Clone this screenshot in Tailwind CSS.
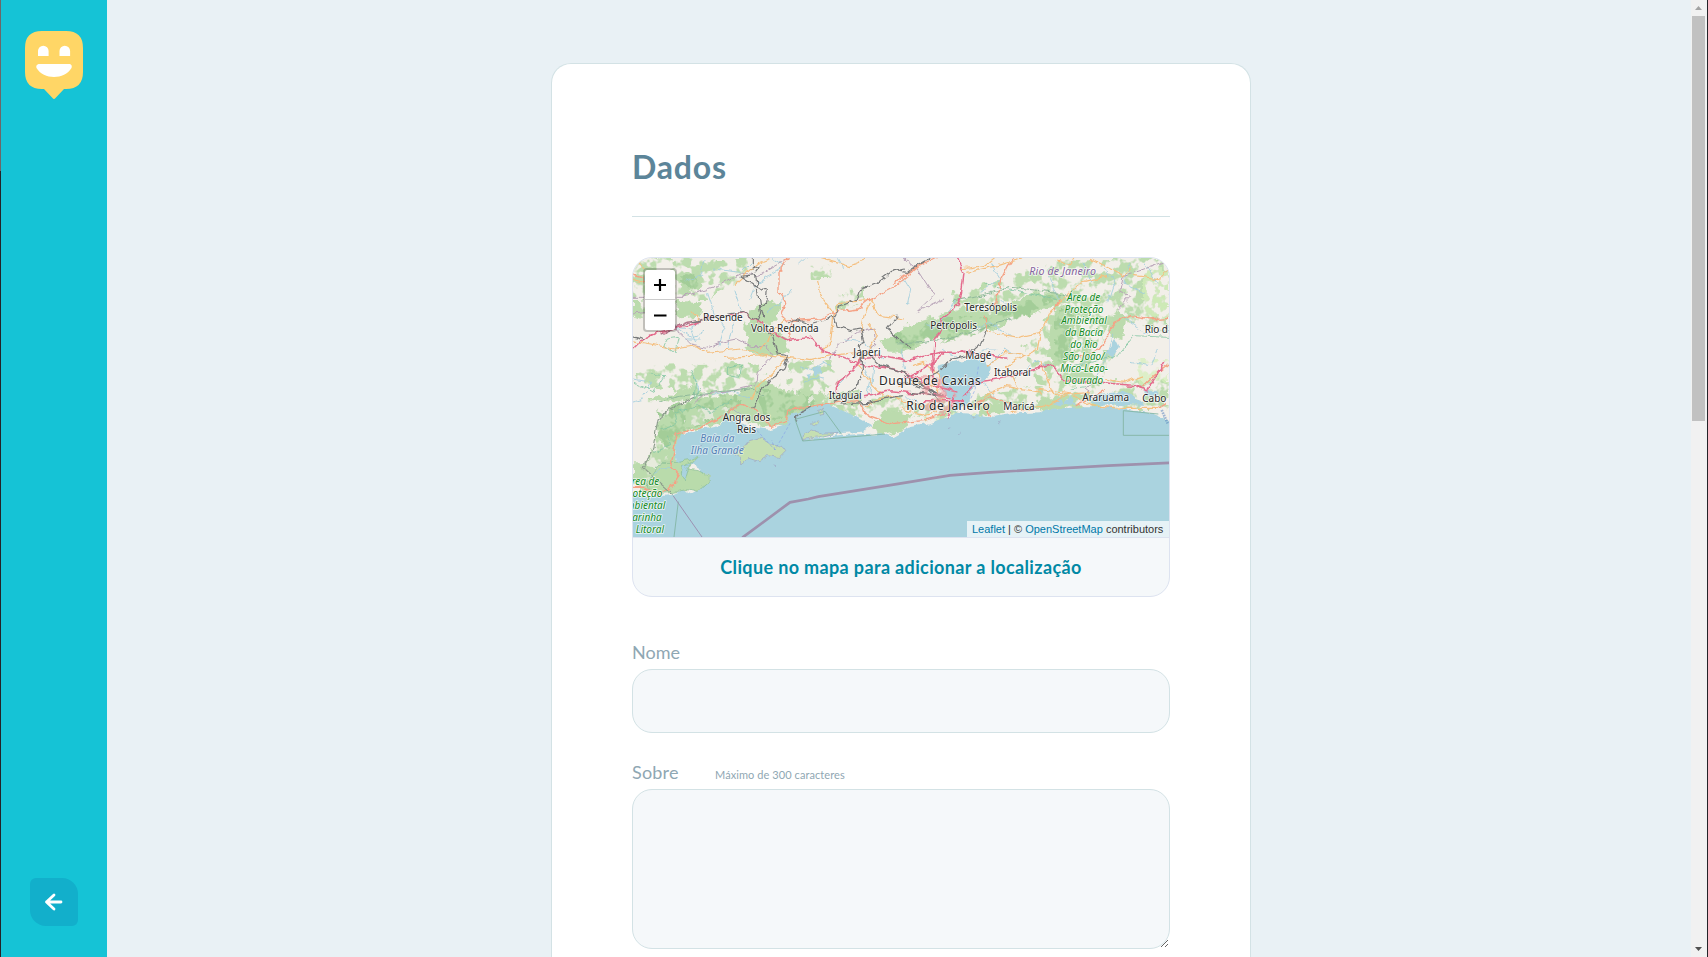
<!DOCTYPE html>
<html lang="pt-BR">
<head>
<meta charset="utf-8">
<title>Happy</title>
<script src="https://cdn.jsdelivr.net/npm/@tailwindcss/browser@4"></script>
</head>
<body class="flex h-screen overflow-hidden bg-[#e9f1f5] font-[Lato,sans-serif]">
<div class="flex w-px shrink-0 flex-col"><div class="h-[171px] bg-[#6c6768]"></div><div class="flex-1 bg-[#242328]"></div></div>
<aside class="flex w-[106px] shrink-0 flex-col items-center justify-between bg-[#15c3d6] pt-[31px] pr-px pb-[31px]">
  <svg class="h-[69px] w-[58px]" viewBox="0 0 58 69">
    <path fill="#ffd666" d="M17 0H41Q58 0 58 17V41Q58 58 41 58H39L30.500 67Q29 69 27.500 67L19 58H17Q0 58 0 41V17Q0 0 17 0Z"/>
    <path fill="#fff" d="M13 25V20a5.300 5.300 0 0 1 10.600 0V25ZM34.500 25V20a5.300 5.300 0 0 1 10.600 0V25ZM13.500 33H45Q47.500 34 46.500 37C43 43 36 46 29 46S15 43 11.500 37Q10.500 34 13.500 33Z"/>
  </svg>
  <button class="flex size-12 items-center justify-center rounded-tl-[6px] rounded-tr-2xl rounded-br-[6px] rounded-bl-2xl bg-[#12afcb]" aria-label="Voltar">
    <svg class="size-6" viewBox="0 0 24 24" fill="none" stroke="#fff" stroke-width="2.800" stroke-linecap="round" stroke-linejoin="round"><path d="M19 12H4.500M12 5L4.500 12L12 19"/></svg>
  </button>
</aside>
<main class="flex min-w-0 flex-1 justify-center pt-[63px] pl-1">
  <form class="w-[700px] shrink-0 rounded-t-[20px] border border-b-0 border-[#d3e2e5] bg-white px-20 pt-20">
    <h1 class="h-[73px] border-b border-[#d3e2e5] text-[32px] leading-[46px] font-bold tracking-[0.8px] text-[#5c8599]">Dados</h1>
    <div class="relative mt-10 h-[340px] overflow-hidden rounded-[20px] border border-[#dde3f0] bg-[#f5f8fa]">
      <svg class="block h-[279px] w-[536px]" viewBox="24 24 1608 837" preserveAspectRatio="none">
        <defs>
          <filter id="rough" x="-5%" y="-5%" width="110%" height="110%"><feTurbulence type="fractalNoise" baseFrequency="0.035" numOctaves="3" seed="4"/><feDisplacementMap in="SourceGraphic" scale="20" xChannelSelector="R" yChannelSelector="G"/><feOffset dx="-4" dy="-4"/></filter>
          <filter id="patchy" x="-5%" y="-5%" width="110%" height="110%"><feTurbulence type="fractalNoise" baseFrequency="0.03" numOctaves="3" seed="9" result="n"/><feColorMatrix in="n" type="matrix" values="0 0 0 0 0 0 0 0 0 0 0 0 0 0 0 9 0 0 0 -4.100" result="m"/><feDisplacementMap in="SourceGraphic" in2="n" scale="45" xChannelSelector="R" yChannelSelector="G" result="d"/><feComposite in="d" in2="m" operator="in"/></filter>
          <filter id="edge" x="-5%" y="-5%" width="110%" height="110%"><feTurbulence type="fractalNoise" baseFrequency="0.04" numOctaves="3" seed="2"/><feDisplacementMap in="SourceGraphic" scale="32" xChannelSelector="R" yChannelSelector="G"/></filter>
        </defs>
        <rect x="0" y="0" width="1660" height="880" fill="#f2efe9"/>
        <!-- scattered woodland -->
        <g fill="#bcdcae" filter="url(#patchy)">
          <path d="M24 24H390L350 90L260 150L150 150L24 210ZM24 390L60 345L330 340L400 350L470 400L420 450H300L200 440ZM500 330L620 330L640 400L560 450H490ZM560 50H620V90H560ZM620 140L720 110L720 160L640 180ZM560 440H1000V500H560Z"/>
          <path d="M990 130L1140 90L1290 30L1632 24V260L1500 200L1440 260L1340 430L1240 400L1200 300L1280 180L1100 200L960 260ZM1000 450L1140 420L1400 400L1632 390V480H1000ZM1300 300H1480L1420 400H1290ZM520 330L620 330L610 400L540 440Z"/>
        </g>
        <path fill="#d5efba" opacity=".7" filter="url(#patchy)" d="M1560 60H1632V200H1560ZM1540 330H1632V400H1540ZM900 500H1060V520H900ZM400 210H460V270H400Z"/>
        <!-- dense forest -->
        <g fill="#bbdbad" filter="url(#edge)">
          <path d="M370 200L395 165L465 155L455 205L430 235L490 262V315L430 312L375 315L362 290L370 250L358 235ZM160 80L225 65L230 115L180 130ZM150 155L230 160L225 200L165 205ZM24 150L50 150V200H24ZM765 270L840 230V305L790 305Z"/>
          <path d="M810 265L850 225L960 190L1010 175L1100 190L1180 150L1230 125L1320 130L1330 155L1220 190L1160 205L1100 240L1060 230L1000 265L960 270L930 250L870 295L810 305Z"/>
          <path d="M1460 210L1480 170L1500 200L1495 270L1450 260ZM1280 190L1330 160L1360 200L1320 330L1290 350L1270 300Z"/>
          <path d="M70 450L105 430L130 440L210 400L230 430L150 460ZM24 640L60 640L100 560L95 520L140 480L210 445L330 430L400 395L480 420L620 435L700 420L720 455L600 475L540 490L500 530L420 530L340 505L240 530L170 550L150 620L150 710L60 730L24 700Z"/>
          <path d="M730 530L790 475L860 490L840 540L780 555ZM1060 470L1130 460L1140 485L1050 500ZM1240 450L1320 440L1330 475L1240 485Z"/>
        </g>
        <!-- relief inside the forests -->
        <g fill="#a3cd98" filter="url(#patchy)">
          <path d="M100 480L210 445L330 430L360 460L300 500L170 550L130 600L110 560ZM810 265L960 200L1100 200L1230 135L1320 140L1220 190L1060 250L870 295L810 305ZM400 420L620 440L500 500L420 500ZM1290 180H1350V340H1290ZM170 80L220 75V115H180Z"/>
        </g>
        <path fill="#f2efe9" filter="url(#patchy)" opacity=".8" d="M200 490L320 470L300 500L180 530ZM90 560L130 600L120 700L60 690ZM560 440H700V460H560Z"/>
        <!-- sea, bays and lagoons -->
        <g fill="#aad3df" filter="url(#rough)">
          <path d="M0 712L60 745L145 738L180 722L205 735L228 722L240 702L262 690L245 675L222 682L226 660L200 645L185 662L165 658L155 640L152 610L160 575L175 556L230 540L290 528L310 505L350 520L380 535L440 542L490 528L500 495L525 488L565 476L610 465L650 482L690 500L745 532L715 548L650 552L535 572L650 558L780 553L805 562L850 536L910 525L950 510L985 500L980 490L1050 495L1110 503L1180 493L1250 490L1270 480L1370 475L1450 475L1510 482L1590 494L1615 505L1660 530V900H0Z"/>
          <path d="M940 350L1000 335L1060 330L1100 350L1098 380L1060 410L1038 430L1032 470L990 485L985 455L960 430L950 380ZM570 355L595 350L590 375L570 380ZM545 375L560 372L555 390ZM1450 310L1475 270L1485 290L1460 330ZM1400 465L1420 435L1500 428L1550 455L1560 470ZM1290 460L1310 445L1320 468ZM1320 465L1340 445L1355 468ZM1560 425H1600V440H1570Z"/>
        </g>
        <g fill="#c5dfb2" stroke="#9fa6c4" stroke-width="2" filter="url(#rough)">
          <path d="M330 610L355 600L370 580L410 568L440 585L475 588L485 605L465 625L430 620L405 638L375 628L350 648L350 625ZM535 572L540 555L565 543L590 552L645 551L590 562Z"/>
          <path d="M565 525l12-10 5 5-10 10ZM580 485l15-5 5 10-15 3ZM1040 498l12 2-5 5ZM972 540l10-4M1005 553l5 0M1125 525l8-7M450 648l6 2M300 510l25-30 35 25-30 10ZM225 590l10-5"/>
        </g>
        <g fill="#b9dbab" stroke="#86bb94" stroke-width="2" filter="url(#rough)">
          <path d="M160 640L190 635L225 625L205 645L190 660L220 665L250 680L262 692L240 710L220 730L190 722L150 730L80 735L70 700L110 640Z"/>
          <path fill="#aad3df" d="M175 650L205 640L190 655L180 690L172 675Z"/>
        </g>
        <!-- rivers -->
        <g fill="none" stroke="#9fcddd" stroke-width="2.500" filter="url(#rough)">
          <path d="M60 80L80 130L95 140M240 30L230 80L180 100M250 130L270 190L300 240L285 290M330 120L350 180L320 250L310 300M380 40L350 70L270 60M440 25L480 50L400 100L380 150M500 120L470 160L430 190M525 50L550 25M230 215L195 240L160 235L200 265L240 250M200 240L215 280M180 270L230 270M30 390L80 400L60 440M210 380L225 440M265 440L330 425L380 450M640 25L660 60M660 270L720 280L780 330M720 340L740 400L730 440M750 350L740 440M690 360L640 410M830 300L845 360M835 80L860 120L850 170M960 300L1000 330M900 220L930 240L970 200M1045 240L1100 220L1160 260M1040 320L1080 300L1120 300M1090 350L1140 300L1180 320M1170 390L1230 340L1280 350M1000 150L970 190M1100 40L1130 90L1070 130M1130 150L1160 180M1270 80L1310 160M1380 40L1400 100M1440 60L1470 100L1450 160M1520 40L1500 100L1560 130M1560 40L1600 100M1500 210L1560 250L1632 250M1470 260L1440 340L1410 400M1400 310L1350 380M1520 340L1580 350L1600 300M90 670L130 655L150 660M60 450L24 460M840 440L900 470M1080 400L1110 440M530 350L560 365L600 340L620 350M540 400L570 385L600 390"/>
          <path stroke="#84c7a3" d="M200 360L215 400L210 450L230 420M30 400L90 430L120 380L80 375M130 270L160 265L150 310L120 290L130 270M310 355L350 345L345 385L310 380L310 355M1340 420L1400 410M1320 360L1480 320L1530 260L1632 265M1080 100L1140 120L1300 150M110 540L160 520L150 490L220 470L260 490L330 450M90 610L140 590L130 560"/>
        </g>
        <!-- boundaries -->
        <g fill="none" stroke="#b7a2b7" stroke-width="3" filter="url(#rough)">
          <path d="M24 195L65 190M155 225L170 255L200 285L250 295L290 280L340 270L380 290L430 290L445 320L400 370L395 410L300 430L240 435L210 460M840 25L880 60L930 140L880 190L960 150M24 145H180L210 130L280 110L350 75L400 80L490 30M1632 35L1560 60L1500 80L1490 130L1520 140L1480 180M620 330L640 290L700 250L750 240L755 285L690 330M1410 400L1380 420L1420 450"/>
          <path stroke="#8fb99a" d="M990 155L1080 140L1160 115L1300 130L1340 150M820 285L900 280L960 270L1050 245L1160 210M105 460L130 450L180 440L260 430L380 420L420 440"/>
        </g>
        <!-- secondary roads -->
        <g fill="none" stroke="#f5bf7f" stroke-width="3.500" filter="url(#rough)">
          <path d="M24 275L80 285L150 300L220 290L250 310L350 300L420 315L490 325L560 335L620 320L700 310M60 60L40 30M330 110L400 45L450 25M410 300L440 260L480 210M580 95L590 140L630 195M590 25L680 50L740 25M630 195L650 160L740 155L770 200L840 210M630 195L620 280L590 310M740 155L720 200L710 250M735 225L760 260L720 320L700 350L740 400L780 440M380 450L400 415L490 325M24 90L90 110L150 90M300 325L430 320M200 185L230 215M1010 60L1080 50L1110 25M1030 70L1120 50L1200 24M1300 30L1340 50L1350 24M1400 30L1500 80L1520 55M1530 80L1610 90L1632 60M1450 80L1370 100L1330 140L1280 190L1250 250L1180 265L1100 250L1090 240M1250 250L1240 300L1200 320L1140 310L1090 350M1250 340L1290 440L1400 430M1330 440L1250 475L1160 488M1240 420L1340 435L1400 470L1500 478L1600 478M720 470L760 450L810 440L840 460L900 470L960 450M860 350L900 340L950 380L940 430M820 410L900 400L960 420M1560 380L1500 400L1440 390M1080 440L1150 410L1250 430M1180 410L1150 350L1200 320M830 480L900 500L940 490"/>
          <path stroke="#f5a285" stroke-width="4" d="M490 24L465 70L465 130L485 160L470 200L490 220M24 75L60 85L60 105M490 215L590 210L630 190L700 180L740 150L800 120L840 90L900 40M510 205L495 240L500 270M810 100L870 60L940 24M1110 185L1130 90L1150 50L1170 24M1080 200L1090 240M1310 150L1290 190M1350 330L1430 300L1470 220L1520 200L1580 210L1632 205M1100 500L1070 460L1040 470M1060 460L1100 440L1200 485M1550 420L1590 380L1632 345M24 715L60 715L100 735L135 720L165 680L140 655L150 600L160 555L240 530L300 500L350 465L400 485L440 535L490 520L495 480L560 475L640 460L700 455L730 500L800 525L840 520L900 515L960 495L980 460M1600 475L1625 460M1350 470L1440 425"/>
        </g>
        <!-- main roads -->
        <g fill="none" stroke="#e46c8d" stroke-width="4.500" filter="url(#rough)">
          <path d="M24 305L60 270L100 250L210 225L260 200L310 200L360 190L390 210L430 240L490 275L560 265L600 310L640 320L700 345L810 360L890 390L940 440L980 450M640 430L640 400L670 380L700 350L720 325L780 320L850 335L950 310L1030 310M1025 312L1150 325M720 440L800 425L900 435L970 440M1000 24L1020 70L1010 150L990 180L955 210L950 250L930 270L925 380L960 430M1020 440L1060 400L1150 385L1240 360L1280 345L1320 395L1420 400L1540 410L1570 425L1620 340M990 440L980 470L970 510M840 390L900 360L960 310M920 320L930 410L1000 430M900 455H1020M1540 415L1560 420"/>
          <path stroke="#b2758a" d="M110 255L190 220L230 215"/>
        </g>
        <g fill="none" stroke="#77797a" stroke-width="3.500" filter="url(#rough)">
          <path d="M24 260L50 265L60 270M310 195L360 190L400 215L410 195L400 120L395 80L350 85L390 110L430 125L425 160L410 170L420 210M385 25L385 60L410 50L395 70M430 240L445 260L460 315L490 320L480 360L440 390L405 440L385 480M490 225L510 210L560 225L630 205L650 170L700 150L710 120L760 100L800 70L840 60M630 200L640 230L680 245L710 240L720 280L700 290L715 320L715 360L700 410L660 440L630 460M730 315L770 350L840 370L890 400L930 440L960 470M1090 240L1070 285L1030 320L980 330L940 370L900 390M810 65L850 70L880 50L925 25M860 300L790 240L820 200M820 400L880 410L960 440M840 380L920 420L950 440L860 430M670 445L650 465L730 460L830 440M515 515L515 500L560 475M200 220L300 200"/>
          <path stroke="#8c9c8c" d="M210 445L140 480L105 510L90 600L55 655L150 740"/>
        </g>
        <g fill="#ef9aa0" opacity=".6" filter="url(#patchy)"><path d="M880 390L950 380L1000 440L970 490L900 480L870 430Z"/></g>
        <g fill="none" stroke="#80b3a0" stroke-width="2.500"><path d="M510 508L533 573L780 552M510 508L600 484L650 553M160 755L147 861M1495 482V556H1632M1495 482L1600 492"/></g>
        <path fill="none" stroke="#9c91b1" stroke-width="3" d="M145 738L231 861"/>
        <path fill="none" stroke="#8aa6e8" stroke-width="2" stroke-dasharray="9 6" d="M385 530L450 600L495 520M450 600L440 570M1060 350L1050 420L1035 450"/>
        <path fill="none" stroke="#4d7cbb" stroke-width="8" opacity=".5" stroke-dasharray="5 3" d="M1610 480L1628 520"/>
        <path fill="none" stroke="#9e91ad" stroke-width="8" d="M352 863L495 757L550 747L580 740L810 703L975 676L1095 667L1450 647L1640 638"/>
        <!-- place names -->
        <g class="font-['Noto_Sans',sans-serif]" fill="#262626" stroke="#fff" stroke-opacity=".75" stroke-width="5" stroke-linejoin="round" paint-order="stroke" font-size="30">
          <text x="234" y="213" textLength="119">Resende</text>
          <text x="378" y="245" textLength="203">Volta Redonda</text>
          <text x="685" y="318" textLength="82">Japeri</text>
          <text x="611" y="446" textLength="99">Itaguaí</text>
          <text x="1018" y="182" textLength="158">Teresópolis</text>
          <text x="916" y="236" textLength="140">Petrópolis</text>
          <text x="1021" y="327" textLength="78">Magé</text>
          <text x="1107" y="379" textLength="110">Itaboraí</text>
          <text x="1559" y="248" textLength="70">Rio d</text>
          <text x="762" y="405" font-size="36" textLength="305">Duque de Caxias</text>
          <text x="844" y="481" font-size="36" textLength="250">Rio de Janeiro</text>
          <text x="1135" y="480" textLength="94">Maricá</text>
          <text x="1372" y="452" textLength="140">Araruama</text>
          <text x="1552" y="457" textLength="72">Cabo</text>
          <text x="293" y="513" textLength="143">Angra dos</text>
          <text x="336" y="550" textLength="57">Reis</text>
          <g font-style="italic" fill="#5580b5" stroke-opacity=".5"><text x="226" y="576" textLength="102">Baía da</text><text x="197" y="612" textLength="159">Ilha Grande</text></g>
          <text x="1213" y="76" font-style="italic" font-size="32" fill="#85659d" textLength="200">Rio de Janeiro</text>
          <g font-style="italic" fill="#128a1e" text-anchor="middle">
            <text x="1376" y="152" textLength="100">Área de</text><text x="1377" y="188" textLength="117">Proteção</text><text x="1377" y="223" textLength="137">Ambiental</text><text x="1377" y="259" textLength="114">da Bacia</text><text x="1377" y="295" textLength="82">do Rio</text><text x="1377" y="330" textLength="124">São João/</text><text x="1377" y="366" textLength="143">Mico-Leão-</text><text x="1377" y="402" textLength="115">Dourado</text>
          </g>
          <g font-style="italic" fill="#128a1e" text-anchor="end">
            <text x="103" y="704">rea de</text><text x="112" y="740">oteção</text><text x="121" y="776">mbiental</text><text x="110" y="812">arinha</text><text x="117" y="848">Litoral</text>
          </g>
        </g>
      </svg>
      <div class="absolute top-[10px] left-[10px] w-[34px] rounded-[4px] border-2 border-black/20 bg-white bg-clip-padding text-black">
        <div class="flex h-[30px] items-center justify-center border-b border-[#ccc]"><svg class="size-[14px]" viewBox="0 0 14 14"><path d="M7 1V13M1 7H13" stroke="#000" stroke-width="2.200"/></svg></div>
        <div class="flex h-[30px] items-center justify-center"><svg class="size-[14px]" viewBox="0 0 14 14"><path d="M1 7.500H13.500" stroke="#000" stroke-width="2.200"/></svg></div>
      </div>
      <div class="absolute top-[263px] right-0 h-4 w-[202px] bg-white/70 pl-[5px] font-['Liberation_Sans',sans-serif] text-[11px] leading-4 whitespace-nowrap text-[#333]"><span class="text-[#0078a8]">Leaflet</span> | © <span class="text-[#0078a8]">OpenStreetMap</span> contributors</div>
      <div class="flex h-[59px] items-center justify-center border-t border-[#dde3f0] text-[18px] font-bold text-[#0089a5]"><span class="tracking-[0.36px]">Clique no mapa para adicionar a localização</span></div>
    </div>
    <label class="mt-10 block h-8 pt-px text-[18px] leading-7 text-[#8fa7b3]">Nome</label>
    <input class="block h-16 w-full rounded-[20px] border border-[#d3e2e5] bg-[#f5f8fa]">
    <label class="mt-6 flex h-8 items-baseline pt-px text-[18px] leading-7 text-[#8fa7b3]"><span class="w-[83px] tracking-[0.2px]">Sobre</span><span class="text-[11px] tracking-[0.08px]">Máximo de 300 caracteres</span></label>
    <textarea class="block h-40 w-full resize-y rounded-[20px] border border-[#d3e2e5] bg-[#f5f8fa]"></textarea>
  </form>
</main>
<div class="flex w-4 shrink-0 flex-col justify-between bg-[#f1f1f1] pb-[6px] pl-px">
  <div><svg class="block h-4 w-[13px]" viewBox="0 0 13 16"><path d="M3 10L6.500 6L10 10Z" fill="#a3a3a3"/></svg><div class="h-[405px] w-[13px] bg-[#c1c1c1]"></div></div>
  <svg class="ml-[3px] h-1 w-[7px]" viewBox="0 0 7 4"><path d="M0 0H7L3.500 4Z" fill="#505050"/></svg>
</div>
<div class="w-px shrink-0 bg-[#242328]"></div>
</body>
</html>
